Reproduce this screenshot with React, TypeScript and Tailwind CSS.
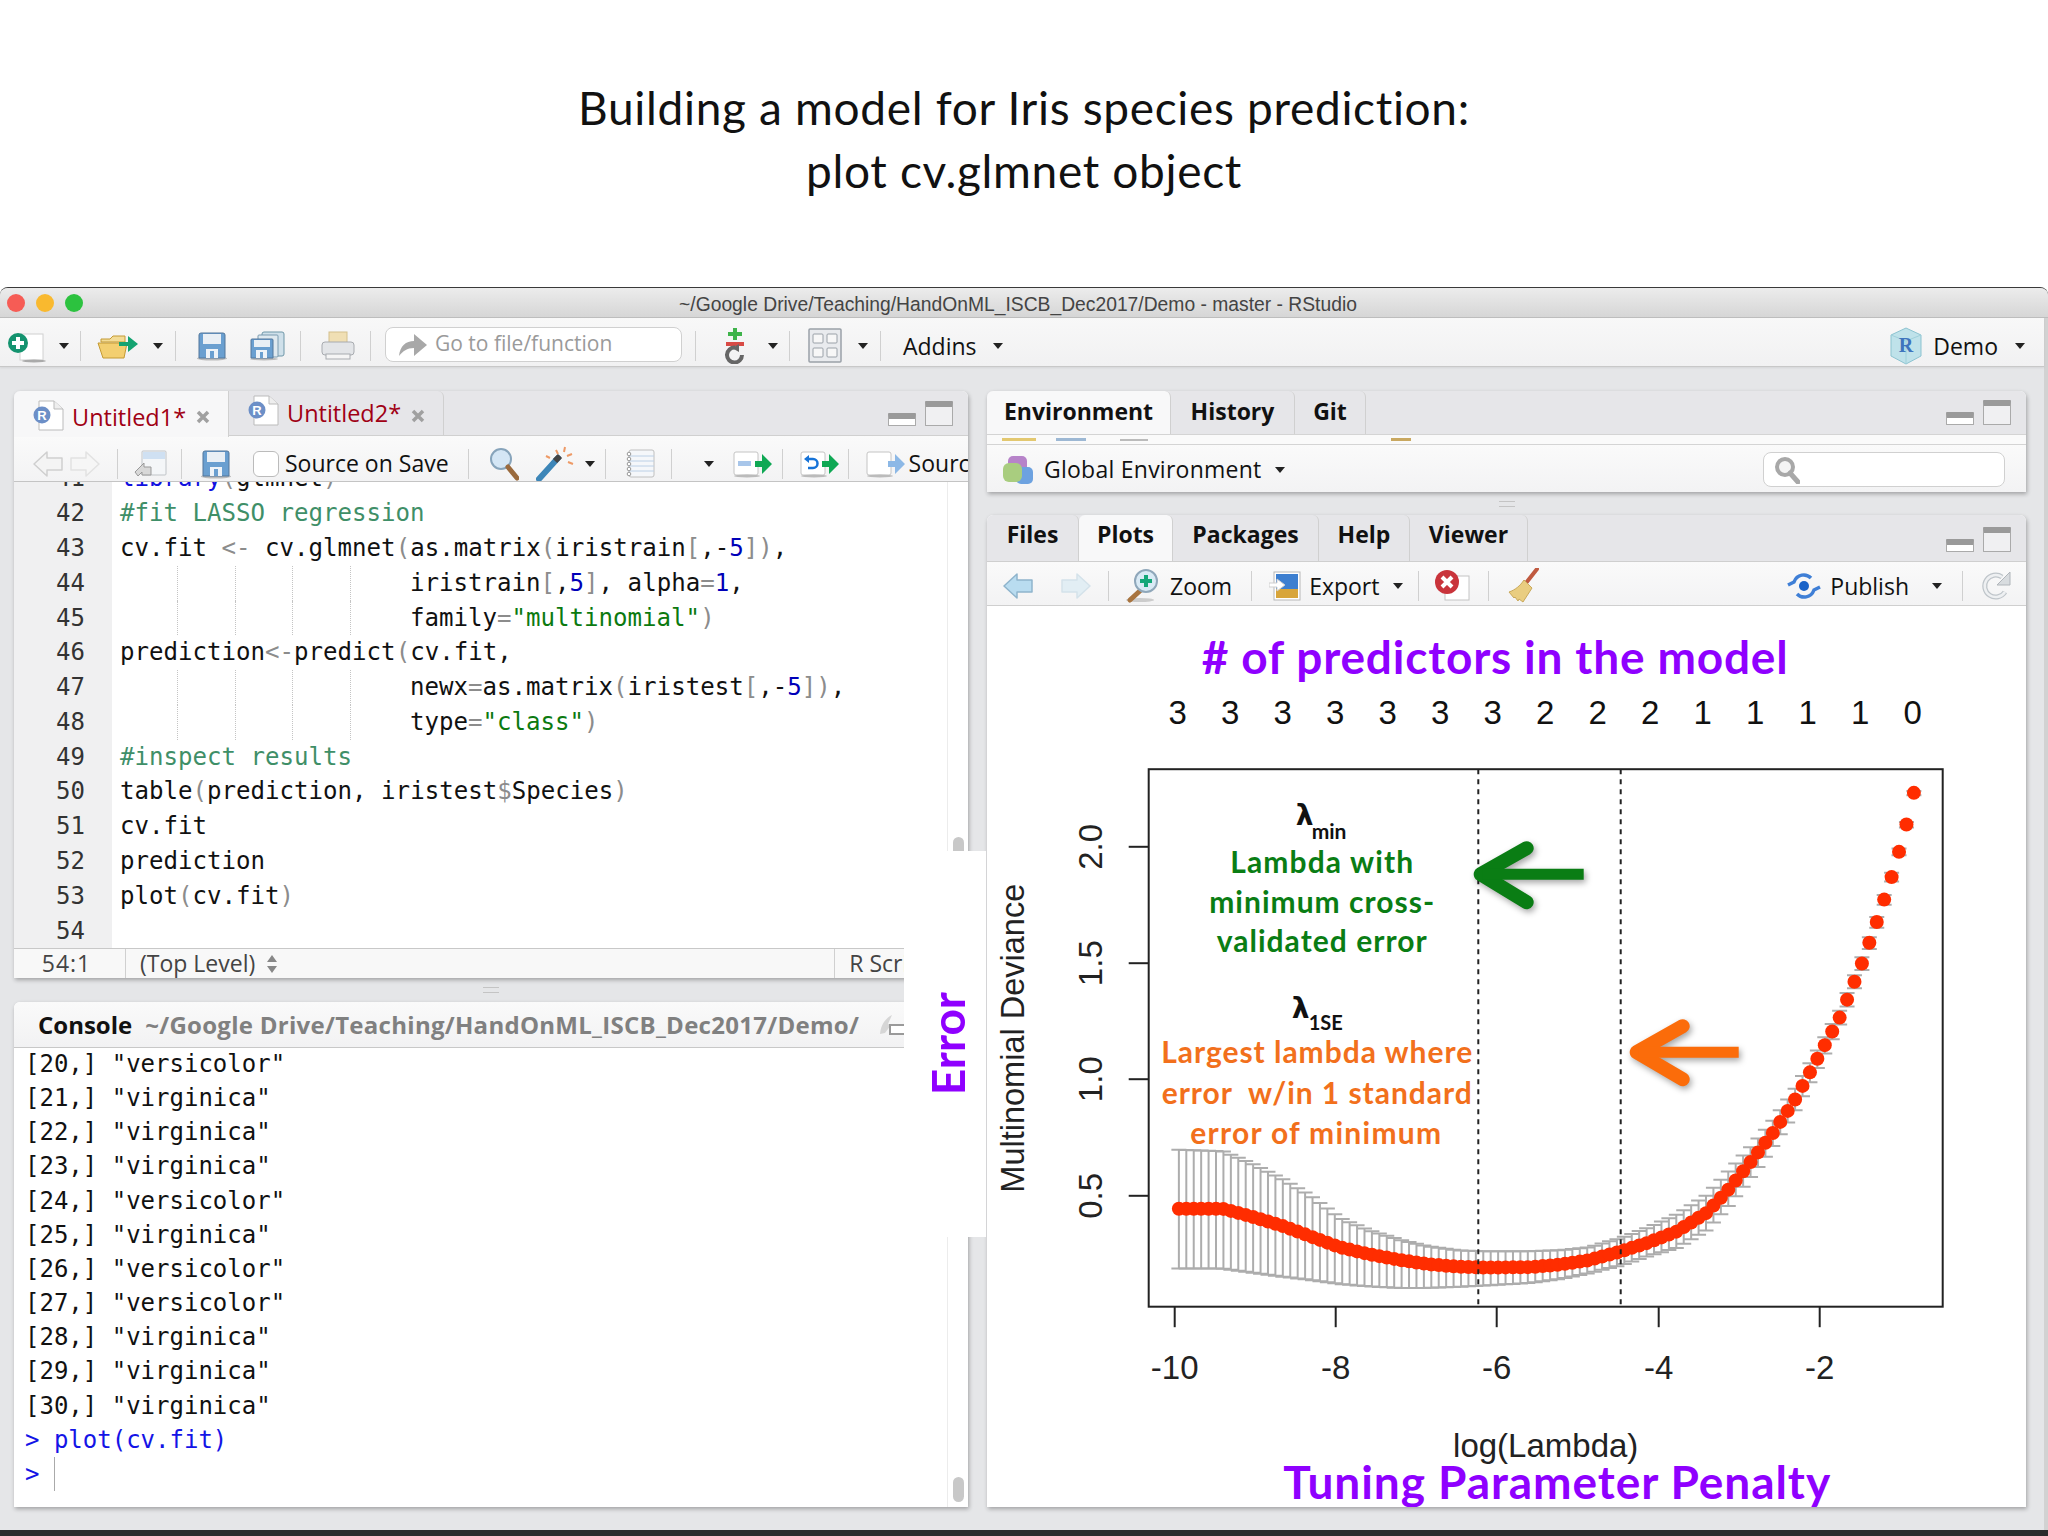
import React from 'react';

const UI = "[font-family:'Open_Sans',sans-serif]";
const MONO = "[font-family:'DejaVu_Sans_Mono',monospace]";

function Caret({ className = '' }: { className?: string }) {
  return (
    <svg width="10" height="6" viewBox="0 0 10 6" className={`shrink-0 ${className}`}>
      <path d="M0 0h10L5 6z" fill="#222" />
    </svg>
  );
}

function Sep({ className = '' }: { className?: string }) {
  return <div className={`w-px h-[30px] bg-[#d0d0d0] shrink-0 ${className}`} />;
}

function Floppy({ className = '' }: { className?: string }) {
  return (
    <svg width="30" height="30" viewBox="0 0 30 30" className={`shrink-0 ${className}`}>
      <ellipse cx="15" cy="27.5" rx="15" ry="2" fill="#bbb" />
      <path d="M2 4a2 2 0 0 1 2-2h22a2 2 0 0 1 2 2v23H2z" fill="#6a9fd0" stroke="#52779b" />
      <rect x="6" y="3" width="18" height="10" fill="#e9eff5" />
      <rect x="9" y="18" width="12" height="9" fill="#eef3f8" />
      <rect x="13" y="20" width="4" height="7" fill="#6a9fd0" />
    </svg>
  );
}

function NewFile() {
  return (
    <svg width="38" height="36" viewBox="0 0 38 36" className="shrink-0">
      <rect x="12" y="6" width="23" height="26" fill="#fff" stroke="#d0d0d0" />
      <ellipse cx="26" cy="33" rx="12" ry="1.5" fill="#aaa" />
      <circle cx="10" cy="15" r="10" fill="#14936f" />
      <path d="M10 9v12M4 15h12" stroke="#fff" strokeWidth="4" />
    </svg>
  );
}

function OpenFolder() {
  return (
    <svg width="44" height="32" viewBox="0 0 44 32" className="shrink-0">
      <path d="M4 9h9l3-3h12v6H4z" fill="#f3dc96" stroke="#c49a34" />
      <path d="M1 13h29l-3 15H6z" fill="#f3cf70" stroke="#c49a34" />
      <path d="M22 12h9V6l10 8-10 8v-6h-9z" fill="#14a371" />
    </svg>
  );
}

function SaveAll() {
  return (
    <svg width="36" height="32" viewBox="0 0 36 32" className="shrink-0">
      <rect x="12" y="2" width="22" height="24" rx="2" fill="#cfe0ea" stroke="#6f97a8" />
      <rect x="8" y="5" width="20" height="22" rx="1" fill="#dfe9ef" stroke="#7b9bb0" />
      <ellipse cx="14" cy="29" rx="14" ry="1.5" fill="#bbb" />
      <path d="M1 10a1 1 0 0 1 1-1h20a1 1 0 0 1 1 1v18H1z" fill="#6a9fd0" stroke="#52779b" />
      <rect x="4" y="10" width="16" height="7" fill="#e9eff5" />
      <rect x="6" y="20" width="11" height="8" fill="#eef3f8" />
      <rect x="10" y="22" width="3" height="6" fill="#6a9fd0" />
    </svg>
  );
}

function Printer() {
  return (
    <svg width="34" height="32" viewBox="0 0 34 32" className="shrink-0">
      <rect x="8" y="2" width="18" height="12" fill="#f0dfb4" stroke="#d4c08c" />
      <rect x="1" y="12" width="32" height="13" rx="3" fill="#e3e5e8" stroke="#a8abb0" />
      <rect x="5" y="24" width="24" height="5" fill="#f5f5f5" stroke="#a8abb0" />
    </svg>
  );
}

function VcsIcon() {
  return (
    <svg width="24" height="36" viewBox="0 0 24 36" className="shrink-0">
      <path d="M12 0v12M5 6h14" stroke="#3eb34a" strokeWidth="4" />
      <rect x="3" y="14" width="18" height="4" fill="#d84a45" />
      <path d="M19 27a7.5 7.5 0 1 1-7-7.5" fill="none" stroke="#666" strokeWidth="4" />
      <path d="M9 20l7-4v8z" fill="#666" />
    </svg>
  );
}

function GridIcon() {
  return (
    <svg width="34" height="36" viewBox="0 0 34 36" className="shrink-0">
      <rect x="1" y="1" width="32" height="33" rx="1" fill="#e9ebee" stroke="#9aa1a8" strokeWidth="1.5" />
      {[5, 19].map(x =>
        [6, 20].map(y => (
          <rect key={`${x}-${y}`} x={x} y={y} width="10" height="9" rx="1" fill="#f7f7f7" stroke="#9aa1a8" />
        ))
      )}
    </svg>
  );
}

function RProject() {
  return (
    <svg width="34" height="38" viewBox="0 0 34 38" className="shrink-0">
      <path d="M17 1l15 7v21l-15 8-15-8V8z" fill="#bfe2ea" stroke="#8cc3d0" />
      <path d="M2 8l15 6 15-6M17 14v23" fill="none" stroke="#9fd0da" />
      <text x="17" y="25" textAnchor="middle" fontSize="20" fontWeight="700" fill="#3f75bd" fontFamily="Liberation Serif, serif">R</text>
    </svg>
  );
}

function RDoc({ className = '' }: { className?: string }) {
  return (
    <svg width="32" height="34" viewBox="0 0 32 34" className={`shrink-0 ${className}`}>
      <path d="M6 4h15l9 8v21H6z" fill="#fff" stroke="#bbb" />
      <path d="M21 4v8h9" fill="#eee" stroke="#bbb" />
      <circle cx="9" cy="18" r="8.5" fill="#6c8fc7" />
      <text x="9" y="23" textAnchor="middle" fontSize="13" fontWeight="700" fill="#fff" fontFamily="Liberation Sans, sans-serif">R</text>
    </svg>
  );
}

function CloseX({ className = '' }: { className?: string }) {
  return (
    <svg width="14" height="14" viewBox="0 0 14 14" className={`shrink-0 ${className}`}>
      <path d="M2 2l10 10M12 2L2 12" stroke="#a0a0a0" strokeWidth="3.5" />
    </svg>
  );
}

function PaneButtons() {
  return (
    <div className="flex items-end gap-[9px] ml-auto pb-[9px] mr-[15px]">
      <div className="w-[28px] h-[13px] border border-[#aaa] border-t-[6px] border-t-[#9a9a9a] rounded-[1px] bg-white" />
      <div className="w-[28px] h-[25px] border border-[#aaa] border-t-[6px] border-t-[#9a9a9a] rounded-[1px] bg-[#f0f0f2]" />
    </div>
  );
}

function ArrowIcon({ dir, fill, stroke }: { dir: 'left' | 'right'; fill: string; stroke: string }) {
  return (
    <svg width="30" height="28" viewBox="0 0 30 28" className={`shrink-0 ${dir === 'right' ? '-scale-x-100' : ''}`}>
      <path d="M1 14L14 2v6h15v12H14v6z" fill={fill} stroke={stroke} strokeWidth="1.5" strokeLinejoin="round" />
    </svg>
  );
}

function RunIcon({ kind }: { kind: 'run' | 'rerun' | 'source' }) {
  return (
    <svg width="40" height="30" viewBox="0 0 40 30" className="shrink-0">
      <rect x="1" y="3" width="24" height="23" rx="2" fill="#fff" stroke="#c4c4c4" />
      <ellipse cx="14" cy="27" rx="13" ry="1.5" fill="#bbb" />
      {kind === 'run' && <rect x="5" y="12" width="13" height="5" fill="#a8c6ea" />}
      {kind === 'rerun' && (
        <>
          <path d="M8 10h5a4.5 4.5 0 0 1 0 9H8" fill="none" stroke="#1673d8" strokeWidth="2.5" />
          <path d="M4 10l5-4v8z" fill="#1673d8" />
        </>
      )}
      <path d="M22 12h7V5l10 10-10 10v-7h-7z" fill={kind === 'source' ? '#8cb8e6' : '#0fa854'} />
    </svg>
  );
}

function Magnifier() {
  return (
    <svg width="30" height="34" viewBox="0 0 30 34" className="shrink-0">
      <circle cx="12" cy="12" r="10" fill="#d4e6f5" stroke="#87a4bb" strokeWidth="2" />
      <path d="M19 20l9 11" stroke="#9a6a3d" strokeWidth="5" strokeLinecap="round" />
    </svg>
  );
}

function Wand() {
  return (
    <svg width="38" height="36" viewBox="0 0 38 36" className="shrink-0">
      <path d="M3 33L22 12" stroke="#3d86b8" strokeWidth="6" strokeLinecap="round" />
      <path d="M19 15l5-5" stroke="#444" strokeWidth="6" />
      <path d="M20 4l2 4M29 1l-1 5M36 8l-5 2M37 18l-5-2M10 10l4 2" stroke="#ee9a66" strokeWidth="2" />
    </svg>
  );
}

function Notebook() {
  return (
    <svg width="30" height="32" viewBox="0 0 30 32" className="shrink-0">
      <rect x="3" y="2" width="25" height="27" rx="2" fill="#f5f7fa" stroke="#c0c0c0" />
      {[8, 13, 18, 23].map(y => (
        <path key={y} d={`M3 ${y}h25`} stroke="#bcd0e6" />
      ))}
      {[6, 11, 16, 21, 26].map(y => (
        <circle key={y} cx="3" cy={y} r="1.8" fill="#fff" stroke="#999" />
      ))}
    </svg>
  );
}

function PopOut() {
  return (
    <svg width="34" height="30" viewBox="0 0 34 30" className="shrink-0">
      <rect x="9" y="2" width="24" height="24" rx="1" fill="#f4f6f8" stroke="#c0c4c8" />
      <rect x="10" y="3" width="22" height="7" fill="#cfe0f2" />
      <path d="M2 23l9-9v4h7v8h-9v-3l-4 4z" fill="#d8d8d8" stroke="#999" />
    </svg>
  );
}

function EnvIcon() {
  return (
    <svg width="32" height="30" viewBox="0 0 32 30" className="shrink-0">
      <rect x="6" y="1" width="19" height="18" rx="5" fill="#b783c9" />
      <rect x="14" y="12" width="17" height="17" rx="5" fill="#6da2e0" />
      <rect x="1" y="8" width="19" height="19" rx="6" fill="#a9cd7f" />
    </svg>
  );
}

function PlotZoomIcon() {
  return (
    <svg width="32" height="34" viewBox="0 0 32 34" className="shrink-0">
      <ellipse cx="14" cy="31" rx="14" ry="2" fill="#ccc" />
      <path d="M16 20L4 31" stroke="#a8743f" strokeWidth="5" strokeLinecap="round" />
      <circle cx="20" cy="12" r="11" fill="#d9eaf5" stroke="#8fa7ba" strokeWidth="2" />
      <path d="M20 6v12M14 12h12" stroke="#14a779" strokeWidth="4" />
    </svg>
  );
}

function ExportIcon() {
  return (
    <svg width="32" height="32" viewBox="0 0 32 32" className="shrink-0">
      <rect x="5" y="2" width="26" height="28" fill="#fff" stroke="#b8b8b8" />
      <rect x="7" y="4" width="22" height="15" fill="#3d7fd0" />
      <rect x="7" y="19" width="22" height="9" fill="#d8a53a" />
      <path d="M0 13h8V9l8 6-8 6v-4H0z" fill="#fff" stroke="#cfcfcf" />
    </svg>
  );
}

function RemoveIcon() {
  return (
    <svg width="36" height="34" viewBox="0 0 36 34" className="shrink-0">
      <rect x="10" y="7" width="24" height="24" fill="#fff" stroke="#c4c4c4" />
      <circle cx="12" cy="13" r="12" fill="#c9343b" />
      <path d="M7 8l10 10M17 8L7 18" stroke="#fff" strokeWidth="4" />
    </svg>
  );
}

function Broom() {
  return (
    <svg width="32" height="36" viewBox="0 0 32 36" className="shrink-0">
      <path d="M19 15L30 1" stroke="#c05a40" strokeWidth="4" strokeLinecap="round" />
      <path d="M17 12l8 8-9 14-4-3-1 2-3-4-1 1-5-6c6-2 11-6 15-12z" fill="#e9cd80" stroke="#c9a85a" />
    </svg>
  );
}

function PublishIcon() {
  return (
    <svg width="34" height="28" viewBox="0 0 34 28" className="shrink-0">
      <path d="M1 13l6-3c3-8 12-9 17-4" fill="none" stroke="#3f7fd6" strokeWidth="3.5" />
      <path d="M33 15l-6 3c-3 8-12 9-17 4" fill="none" stroke="#3f7fd6" strokeWidth="3.5" />
      <circle cx="17" cy="14" r="5" fill="#1a63c8" />
    </svg>
  );
}

function RefreshIcon() {
  return (
    <svg width="32" height="32" viewBox="0 0 32 32" className="shrink-0">
      <path d="M25 22a11 11 0 1 1-3-15" fill="none" stroke="#bfc5ca" strokeWidth="5" />
      <path d="M25 22a11 11 0 1 1-3-15" fill="none" stroke="#eef0f2" strokeWidth="2.5" />
      <path d="M30 2v13H17z" fill="#d8dcdf" stroke="#b0b5ba" />
    </svg>
  );
}

function SearchIcon() {
  return (
    <svg width="26" height="28" viewBox="0 0 26 28" className="shrink-0">
      <circle cx="11" cy="11" r="8" fill="#f4f4f4" stroke="#a8a8a8" strokeWidth="4" />
      <path d="M16 17l8 9" stroke="#a8a8a8" strokeWidth="5" strokeLinecap="round" />
    </svg>
  );
}

function ClearConsole() {
  return (
    <svg width="26" height="26" viewBox="0 0 26 26" className="shrink-0">
      <path d="M1 22C2 12 7 6 13 3l-4 9 3 1-6 8z" fill="#d6d6d6" />
      <rect x="11" y="13" width="15" height="9" fill="#fff" stroke="#9a9a9a" strokeWidth="2" />
    </svg>
  );
}

function Code({ text }: { text: string }) {
  if (text.startsWith('#')) return <span className="text-[#3f8f68]">{text}</span>;
  const parts = text.split(/("[^"]*"|\b\d+\b|[()[\]]|<-|=|\$)/);
  return (
    <>
      {parts.map((p, i) => {
        if (p.startsWith('"')) return <span key={i} className="text-[#0c7a10]">{p}</span>;
        if (/^\d+$/.test(p)) return <span key={i} className="text-[#0000b8]">{p}</span>;
        if (/^([()[\]]|<-|=|\$)$/.test(p)) return <span key={i} className="text-[#8c8c8c]">{p}</span>;
        return <span key={i}>{p}</span>;
      })}
    </>
  );
}

const codeLines: { n: number; text: string; indent?: boolean }[] = [
  { n: 42, text: '#fit LASSO regression' },
  { n: 43, text: 'cv.fit <- cv.glmnet(as.matrix(iristrain[,-5]),' },
  { n: 44, text: 'iristrain[,5], alpha=1,', indent: true },
  { n: 45, text: 'family="multinomial")', indent: true },
  { n: 46, text: 'prediction<-predict(cv.fit,' },
  { n: 47, text: 'newx=as.matrix(iristest[,-5]),', indent: true },
  { n: 48, text: 'type="class")', indent: true },
  { n: 49, text: '#inspect results' },
  { n: 50, text: 'table(prediction, iristest$Species)' },
  { n: 51, text: 'cv.fit' },
  { n: 52, text: 'prediction' },
  { n: 53, text: 'plot(cv.fit)' },
  { n: 54, text: '' },
];

const consoleRows: [string, string][] = [
  ['[20,]', 'versicolor'],
  ['[21,]', 'virginica'],
  ['[22,]', 'virginica'],
  ['[23,]', 'virginica'],
  ['[24,]', 'versicolor'],
  ['[25,]', 'virginica'],
  ['[26,]', 'versicolor'],
  ['[27,]', 'versicolor'],
  ['[28,]', 'virginica'],
  ['[29,]', 'virginica'],
  ['[30,]', 'virginica'],
];

function SourcePane() {
  return (
    <div className="h-[587px] flex flex-col bg-white shadow-[1px_2px_4px_rgba(0,0,0,0.3)] rounded-t-md overflow-hidden">
      <div className="h-[45px] shrink-0 flex bg-[#e6e6e9] border-b border-[#d0d0d0]">
        <div className="w-[215px] h-[46px] flex items-center pl-[19px] bg-[#f7f7f8] border-r border-[#d0d0d0] rounded-tl-md text-[23.5px] text-[#a00014] z-10 whitespace-nowrap">
          <RDoc />
          <span className="ml-[7px] mt-[7px]">Untitled1*</span>
          <CloseX className="ml-[10px] mt-[5px]" />
        </div>
        <div className="w-[215px] flex items-center pl-[19px] border-r border-[#d0d0d0] rounded-tr-md text-[23.5px] text-[#a00014] whitespace-nowrap">
          <RDoc className="-mt-[8px]" />
          <span className="ml-[7px] mt-[2px]">Untitled2*</span>
          <CloseX className="ml-[10px] mt-[5px]" />
        </div>
        <PaneButtons />
      </div>
      <div className="h-[46px] shrink-0 flex items-center pt-[10px] bg-gradient-to-b from-[#fafafa] to-[#f3f3f4] border-b border-[#c4c4c4] text-[23px] text-[#111] overflow-hidden whitespace-nowrap">
        <div className="ml-[19px]"><ArrowIcon dir="left" fill="#f4f4f4" stroke="#cfcfcf" /></div>
        <div className="ml-[7px]"><ArrowIcon dir="right" fill="#f6f6f6" stroke="#e2e2e2" /></div>
        <Sep className="ml-[17px]" />
        <div className="ml-[15px]"><PopOut /></div>
        <Sep className="ml-[14px]" />
        <Floppy className="ml-[19px]" />
        <div className="ml-[22px] w-[26px] h-[26px] rounded-[6px] border border-[#bbb] bg-white shrink-0" />
        <span className="ml-[6px]">Source on Save</span>
        <Sep className="ml-[19px]" />
        <div className="ml-[20px]"><Magnifier /></div>
        <div className="ml-[17px]"><Wand /></div>
        <Caret className="ml-[11px]" />
        <Sep className="ml-[10px]" />
        <div className="ml-[20px]"><Notebook /></div>
        <Sep className="ml-[15px]" />
        <Caret className="ml-[32px]" />
        <div className="ml-[19px]"><RunIcon kind="run" /></div>
        <Sep className="ml-[9px]" />
        <div className="ml-[17px]"><RunIcon kind="rerun" /></div>
        <Sep className="ml-[8px]" />
        <div className="ml-[17px]"><RunIcon kind="source" /></div>
        <span className="ml-[3px]">Source</span>
      </div>
      <div className="flex-1 min-h-0 flex overflow-hidden">
        <div className={`w-[98px] shrink-0 bg-[#f0f0f1] overflow-hidden text-right pr-[27px] text-[24px] leading-[34.8px] text-[#333] ${MONO}`}>
          <div className="-mt-[20.7px]">41</div>
          {codeLines.map(l => (
            <div key={l.n}>{l.n}</div>
          ))}
        </div>
        <div className={`flex-1 min-w-0 overflow-hidden pl-[8px] text-[24.1px] leading-[34.8px] text-[#111] whitespace-pre ${MONO}`}>
          <div className="-mt-[20.7px] h-[34.8px]">
            <span className="text-[#1010e0]">library</span>
            <span className="text-[#8c8c8c]">(</span>glmnet<span className="text-[#8c8c8c]">)</span>
          </div>
          {codeLines.map(l => (
            <div key={l.n} className="flex h-[34.8px]">
              {l.indent && (
                <>
                  <span className="inline-block w-[57.8px] h-full border-r border-dotted border-[#c4c4c4]" />
                  <span className="inline-block w-[57.8px] h-full border-r border-dotted border-[#c4c4c4]" />
                  <span className="inline-block w-[57.8px] h-full border-r border-dotted border-[#c4c4c4]" />
                  <span className="inline-block w-[57.8px] h-full border-r border-dotted border-[#c4c4c4]" />
                  <span className="inline-block w-[58.8px] h-full" />
                </>
              )}
              <span>
                <Code text={l.text} />
              </span>
            </div>
          ))}
        </div>
        <div className="w-[21px] shrink-0 border-l border-[#ececec] flex flex-col justify-end items-center pb-[79px]">
          <div className="w-[11px] h-[32px] rounded-full bg-[#c8c8c8]" />
        </div>
      </div>
      <div className="h-[30px] shrink-0 flex items-center bg-[#f8f8f8] border-t border-[#c8c8c8] text-[23px] text-[#444] overflow-hidden whitespace-nowrap">
        <div className="w-[112px] pr-[6px] tracking-[1px] text-center border-r border-[#d0d0d0] h-full leading-[28px] shrink-0">54:1</div>
        <span className="ml-[14px]">(Top Level)</span>
        <svg width="10" height="18" viewBox="0 0 10 18" className="ml-[12px] shrink-0">
          <path d="M5 0l5 7H0zM5 18l5-7H0z" fill="#888" />
        </svg>
        <div className="ml-[557px] w-px h-full bg-[#d0d0d0] shrink-0" />
        <span className="ml-[14px]">R Script</span>
      </div>
    </div>
  );
}

function ConsolePane() {
  return (
    <div className="h-[505px] flex flex-col bg-white shadow-[1px_2px_4px_rgba(0,0,0,0.3)] rounded-t-md overflow-hidden">
      <div className="h-[46px] shrink-0 flex items-center pl-[24px] bg-gradient-to-b from-[#fafafa] to-[#f2f2f3] border-b border-[#c8c8c8] text-[24px] whitespace-nowrap overflow-hidden">
        <span className="font-bold text-[#111]">Console</span>
        <span className="ml-[13px] font-bold tracking-[0.28px] text-[#808080]">~/Google Drive/Teaching/HandOnML_ISCB_Dec2017/Demo/</span>
        <div className="ml-[20px]"><ClearConsole /></div>
      </div>
      <div className="flex-1 min-h-0 flex overflow-hidden">
        <div className={`flex-1 pl-[11px] -mt-[1px] text-[24px] leading-[34.15px] whitespace-pre text-[#111] ${MONO}`}>
          {consoleRows.map(([idx, val]) => (
            <div key={idx}>{idx} "{val}"</div>
          ))}
          <div className="text-[#1414e6]">{'> plot(cv.fit)'}</div>
          <div className="flex items-center text-[#1414e6]">
            {'> '}
            <span className="w-px h-[34px] bg-[#aaa]" />
          </div>
        </div>
        <div className="w-[21px] shrink-0 border-l border-[#ececec] flex flex-col justify-end items-center pb-[5px]">
          <div className="w-[11px] h-[25px] rounded-full bg-[#c8c8c8]" />
        </div>
      </div>
    </div>
  );
}

function Tab({ label, w, pb, active }: { label: string; w: string; pb: string; active?: boolean }) {
  return (
    <div
      className={`${w} ${pb} flex items-center justify-center font-bold text-[23px] text-[#111] border-r border-[#d0d0d0] rounded-t-md shrink-0 ${
        active ? 'bg-[#f8f8f9] z-10' : ''
      }`}
    >
      {label}
    </div>
  );
}

function EnvPane() {
  return (
    <div className="h-[101px] flex flex-col bg-white shadow-[1px_2px_4px_rgba(0,0,0,0.3)] rounded-t-md overflow-hidden">
      <div className="h-[43px] shrink-0 flex bg-[#e6e6e9]">
        <Tab label="Environment" w="w-[184px]" pb="pb-[2px]" active />
        <Tab label="History" w="w-[124px]" pb="pb-[2px]" />
        <Tab label="Git" w="w-[71px]" pb="pb-[2px]" />
        <PaneButtons />
      </div>
      <div className="h-[11px] shrink-0 flex items-center border-y border-[#d4d4d4] bg-[#fafafa]">
        <span className="ml-[15px] w-[34px] h-[3px] bg-[#e3c870]" />
        <span className="ml-[20px] w-[30px] h-[3px] bg-[#9db8d4]" />
        <span className="ml-[34px] w-[28px] h-[2px] bg-[#bbb]" />
        <span className="ml-[243px] w-[20px] h-[3px] bg-[#c9a860]" />
      </div>
      <div className="flex-1 flex items-center pt-[2px] bg-gradient-to-b from-[#fafafa] to-[#f3f3f4] text-[23px] text-[#111] pl-[15px]">
        <EnvIcon />
        <span className="ml-[10px] tracking-[0.25px]">Global Environment</span>
        <Caret className="ml-[13px]" />
        <div className="ml-auto mr-[21px] w-[242px] h-[35px] rounded-[8px] border border-[#d0d0d0] bg-white flex items-center pl-[10px]">
          <SearchIcon />
        </div>
      </div>
    </div>
  );
}

// control points read off the picture: x, centre, upper bar, lower bar
const curve: number[][] = [
  [380, 906, 787, 1027], [440, 906, 790, 1027], [480, 922, 815, 1035], [520, 940, 845, 1043],
  [560, 962, 880, 1050], [600, 984, 925, 1058], [640, 998, 950, 1063], [680, 1009, 968, 1066],
  [720, 1018, 982, 1066], [760, 1023, 990, 1064], [800, 1025, 992, 1061], [860, 1024, 992, 1056],
  [900, 1019, 990, 1048], [940, 1010, 984, 1036], [984, 992, 965, 1020], [1020, 975, 945, 1002],
  [1060, 952, 918, 985], [1100, 915, 880, 950], [1128, 872, 835, 905], [1158, 817, 787, 848],
  [1189, 758, 733, 785], [1220, 690, 668, 712], [1250, 609, 592, 628], [1282, 522, 508, 536],
  [1312, 415, 402, 428], [1333, 328, 318, 340], [1353, 239, 230, 248], [1363, 189, 182, 196],
  [1374, 129, 124, 135], [1384, 66, 62, 71],
];

const px = (x: number) => 900 + x / 1.366;
const py = (y: number) => 760 + y / 2.02;

function sample(x: number) {
  for (let i = 1; i < curve.length; i++) {
    if (x <= curve[i][0]) {
      const a = curve[i - 1];
      const b = curve[i];
      const t = (x - a[0]) / (b[0] - a[0]);
      return [px(x), py(a[1] + (b[1] - a[1]) * t), py(a[2] + (b[2] - a[2]) * t), py(a[3] + (b[3] - a[3]) * t)];
    }
  }
  const l = curve[curve.length - 1];
  return [px(l[0]), py(l[1]), py(l[2]), py(l[3])];
}

const points = Array.from({ length: 100 }, (_, i) => sample(380 + (i * 1004) / 99));

const ARIAL = 'Liberation Sans, Arial, sans-serif';
const LATO = 'Lato, sans-serif';

function CvPlot() {
  const xTicks: [number, string][] = [[1174, '-10'], [1335, '-8'], [1496, '-6'], [1658, '-4'], [1819, '-2']];
  const yTicks: [number, string][] = [[846.6, '2.0'], [963, '1.5'], [1079, '1.0'], [1195.6, '0.5']];
  const counts = '3 3 3 3 3 3 3 2 2 2 1 1 1 1 0'.split(' ');
  return (
    <svg width="1039" height="901" viewBox="987 607 1039 901" className="block">
      <g transform="translate(0.7 1.2)">
        <text x="1494" y="674" textAnchor="middle" fontFamily={LATO} fontWeight="700" fontSize="46" fill="#8f00ff" textLength="586">
          # of predictors in the model
        </text>
        {counts.map((c, i) => (
          <text key={i} x={1177 + i * 52.5} y="724" textAnchor="middle" fontFamily={ARIAL} fontSize="33" fill="#111">
            {c}
          </text>
        ))}

        <rect x="1148" y="769" width="794" height="537.5" fill="none" stroke="#222" strokeWidth="2" />
        {xTicks.map(([x, t]) => (
          <g key={t}>
            <path d={`M${x} 1306V1327`} stroke="#222" strokeWidth="2" />
            <text x={x} y="1379" textAnchor="middle" fontFamily={ARIAL} fontSize="33" fill="#222">{t}</text>
          </g>
        ))}
        {yTicks.map(([y, t]) => (
          <g key={t}>
            <path d={`M1148 ${y}H1128`} stroke="#222" strokeWidth="2" />
            <text x="1101" y={y} textAnchor="middle" transform={`rotate(-90 1101 ${y})`} fontFamily={ARIAL} fontSize="33" fill="#222">{t}</text>
          </g>
        ))}
        <text x="1023" y="1038" textAnchor="middle" transform="rotate(-90 1023 1038)" fontFamily={ARIAL} fontSize="32.5" fill="#222">
          Multinomial Deviance
        </text>
        <text x="1545" y="1457" textAnchor="middle" fontFamily={ARIAL} fontSize="33" fill="#222">log(Lambda)</text>
        <text x="1556" y="1499" textAnchor="middle" fontFamily={LATO} fontWeight="700" fontSize="46" fill="#8f00ff" textLength="547">
          Tuning Parameter Penalty
        </text>

        <g stroke="#adadad" strokeWidth="2" fill="none">
          {points.map(([x, , u, l], i) => (
            <path key={i} d={`M${x} ${u}V${l}M${x - 7.5} ${u}H${x + 7.5}M${x - 7.5} ${l}H${x + 7.5}`} />
          ))}
        </g>
        <g fill="#ff2d00">
          {points.map(([x, c], i) => (
            <circle key={i} cx={x} cy={c} r="7" />
          ))}
        </g>
        <path d="M1477.6 769V1306M1620 769V1306" stroke="#222" strokeWidth="2" strokeDasharray="5 5" />

        <text x="1295" y="825" fontFamily="DejaVu Sans, sans-serif" fontWeight="700" fontSize="28" fill="#111">λ</text>
        <text x="1311" y="839" fontFamily={LATO} fontWeight="700" fontSize="21" fill="#111">min</text>
        <g fontFamily={LATO} fontWeight="700" fontSize="30" fill="#0a7d14" textAnchor="middle">
          <text x="1321" y="873" textLength="183">Lambda with</text>
          <text x="1321" y="913" textLength="225">minimum cross-</text>
          <text x="1321" y="952" textLength="210">validated error</text>
        </g>
        <text x="1291" y="1018" fontFamily="DejaVu Sans, sans-serif" fontWeight="700" fontSize="28" fill="#111">λ</text>
        <text x="1308" y="1030" fontFamily={LATO} fontWeight="700" fontSize="20" fill="#111">1SE</text>
        <g fontFamily={LATO} fontWeight="700" fontSize="30" fill="#f2701c" textAnchor="middle">
          <text x="1316" y="1063" textLength="311">Largest lambda where</text>
          <text x="1316" y="1104" textLength="310" xmlSpace="preserve">error  w/in 1 standard</text>
          <text x="1315" y="1144" textLength="251">error of minimum</text>
        </g>

        <g className="drop-shadow-[2px_3px_3px_rgba(0,0,0,0.35)]" fill="none" strokeLinecap="round" strokeLinejoin="round">
          <path d="M1526 848L1480 874L1526 902" stroke="#0a7d14" strokeWidth="14" />
          <path d="M1482 874H1583" stroke="#0a7d14" strokeWidth="11" strokeLinecap="butt" />
          <path d="M1682 1026L1636 1052L1682 1079" stroke="#fb6c0a" strokeWidth="14" />
          <path d="M1638 1052H1738" stroke="#fb6c0a" strokeWidth="11" strokeLinecap="butt" />
        </g>
      </g>
    </svg>
  );
}

function PlotsPane() {
  return (
    <div className="h-[992px] flex flex-col bg-white shadow-[1px_2px_4px_rgba(0,0,0,0.3)] rounded-t-md overflow-hidden">
      <div className="h-[46px] shrink-0 flex bg-[#e6e6e9]">
        <Tab label="Files" w="w-[92px]" pb="pb-[7px]" />
        <Tab label="Plots" w="w-[94px]" pb="pb-[7px]" active />
        <Tab label="Packages" w="w-[146px]" pb="pb-[7px]" />
        <Tab label="Help" w="w-[91px]" pb="pb-[7px]" />
        <Tab label="Viewer" w="w-[118px]" pb="pb-[7px]" />
        <PaneButtons />
      </div>
      <div className="h-[45px] shrink-0 flex items-center pt-[5px] bg-gradient-to-b from-[#fafafa] to-[#f3f3f4] border-y border-[#cfcfcf] text-[23px] text-[#111]">
        <div className="ml-[16px]"><ArrowIcon dir="left" fill="#b9dcf0" stroke="#8fb4cc" /></div>
        <div className="ml-[28px]"><ArrowIcon dir="right" fill="#e2eef4" stroke="#d4e2ea" /></div>
        <Sep className="ml-[17px]" />
        <div className="ml-[17px]"><PlotZoomIcon /></div>
        <span className="ml-[12px]">Zoom</span>
        <Sep className="ml-[19px]" />
        <div className="ml-[17px]"><ExportIcon /></div>
        <span className="ml-[8px]">Export</span>
        <Caret className="ml-[14px]" />
        <Sep className="ml-[15px]" />
        <div className="ml-[16px]"><RemoveIcon /></div>
        <Sep className="ml-[17px]" />
        <div className="ml-[18px]"><Broom /></div>
        <div className="ml-auto"><PublishIcon /></div>
        <span className="ml-[9px]">Publish</span>
        <Caret className="ml-[23px]" />
        <Sep className="ml-[20px]" />
        <div className="ml-[17px] mr-[14px]"><RefreshIcon /></div>
      </div>
      <CvPlot />
    </div>
  );
}

function Splitter({ className }: { className: string }) {
  return (
    <div className={`flex items-center justify-center shrink-0 ${className}`}>
      <div className="w-[16px] h-[6px] border-y border-[#c4c4c4]" />
    </div>
  );
}

export default function App() {
  return (
    <div className={`relative w-[2048px] h-[1536px] overflow-hidden bg-white ${UI}`}>
      <div className="h-[287px] pt-[76px] text-center text-[46px] leading-[63px] tracking-[0.67px] text-[#111] [font-family:Lato,sans-serif]">
        <div>Building a model for Iris species prediction:</div>
        <div>plot cv.glmnet object</div>
      </div>

      <div className="h-[1243px] flex flex-col rounded-t-[8px] border-t border-[#3a3a3a] overflow-hidden bg-[#d2d2d2]">
        <div className="relative h-[30px] shrink-0 flex items-center justify-center bg-gradient-to-b from-[#ececec] to-[#d6d6d6] border-b border-[#bdbdbd] text-[19.3px] text-[#444] [font-family:'Liberation_Sans',sans-serif]">
          <div className="absolute left-[7px] flex gap-[11px]">
            <span className="w-[18px] h-[18px] rounded-full bg-[#f65c55]" />
            <span className="w-[18px] h-[18px] rounded-full bg-[#f9b92f]" />
            <span className="w-[18px] h-[18px] rounded-full bg-[#2cc23f]" />
          </div>
          <span className="-ml-[12px] mt-[5px]">~/Google Drive/Teaching/HandOnML_ISCB_Dec2017/Demo - master - RStudio</span>
        </div>

        <div className="w-[2044px] flex-1 min-h-0 flex flex-col bg-[#e5e6e8]">
          <div className="h-[49px] shrink-0 flex items-center pt-[8px] bg-gradient-to-b from-[#f8f8f8] to-[#f1f1f2] border-b border-[#c8c8c8] shadow-[0_1px_2px_rgba(0,0,0,0.08)] text-[23px] text-[#111]">
            <div className="ml-[8px]"><NewFile /></div>
            <Caret className="ml-[13px]" />
            <Sep className="ml-[11px]" />
            <div className="ml-[16px]"><OpenFolder /></div>
            <Caret className="ml-[12px]" />
            <Sep className="ml-[12px]" />
            <Floppy className="ml-[21px]" />
            <div className="ml-[23px]"><SaveAll /></div>
            <Sep className="ml-[14px]" />
            <div className="ml-[20px]"><Printer /></div>
            <Sep className="ml-[15px]" />
            <div className="ml-[14px] w-[297px] h-[35px] -mt-[4px] rounded-[8px] border border-[#d0d0d0] bg-white flex items-center pl-[12px] text-[21px] text-[#9a9a9a]">
              <svg width="30" height="26" viewBox="0 0 30 26" className="shrink-0">
                <path d="M1 25c1-10 7-15 15-15V3l13 11-13 11v-8C9 17 5 20 1 25z" fill="#a8a8a8" />
              </svg>
              <span className="ml-[7px]">Go to file/function</span>
            </div>
            <Sep className="ml-[13px]" />
            <div className="ml-[27px]"><VcsIcon /></div>
            <Caret className="ml-[21px]" />
            <Sep className="ml-[11px]" />
            <div className="ml-[18px]"><GridIcon /></div>
            <Caret className="ml-[16px]" />
            <Sep className="ml-[12px]" />
            <span className="ml-[22px]">Addins</span>
            <Caret className="ml-[16px]" />
            <div className="ml-auto"><RProject /></div>
            <span className="ml-[10px]">Demo</span>
            <Caret className="ml-[17px] mr-[19px]" />
          </div>

          <div className="flex-1 min-h-0 flex gap-[19px] pl-[14px] pt-[24px]">
            <div className="w-[954px] flex flex-col">
              <SourcePane />
              <Splitter className="h-[24px]" />
              <ConsolePane />
            </div>
            <div className="w-[1039px] flex flex-col">
              <EnvPane />
              <Splitter className="h-[23px]" />
              <PlotsPane />
            </div>
          </div>
        </div>
      </div>

      <div className="h-[6px] bg-[#2b2b2b]" />

      {/* white box pasted over the screenshot with the axis label */}
      <div className="absolute left-[904px] top-[851px] w-[82px] h-[386px] bg-white flex items-center justify-center pl-[6px]">
        <span className="[writing-mode:vertical-rl] rotate-180 font-bold text-[46px] leading-none text-[#8f00ff] [font-family:Lato,sans-serif]">
          Error
        </span>
      </div>
    </div>
  );
}
